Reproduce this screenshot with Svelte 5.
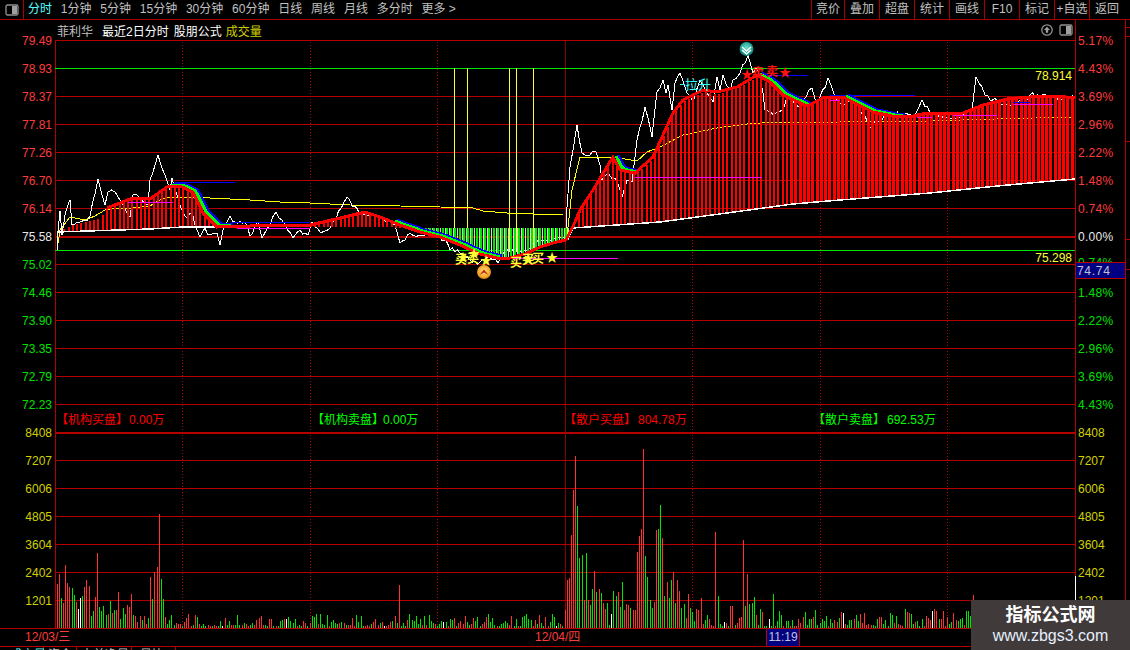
<script>
  const tabs = ['分时','1分钟','5分钟','15分钟','30分钟','60分钟','日线','周线','月线','多分时','更多 >'];
  const tools = ['竞价','叠加','超盘','统计','画线','F10','标记','+自选','返回'];

  const gridY = Array.from({length:21},(_,i)=>40+i*28);
  const dots = [182.5,310.5,437.5,692.5,820.5,947.5];
  const prices = ['79.49','78.93','78.37','77.81','77.26','76.70','76.14','75.58','75.02','74.46','73.90','73.35','72.79','72.23'];
  const pcts = ['5.17%','4.43%','3.69%','2.96%','2.22%','1.48%','0.74%','0.00%','0.74%','1.48%','2.22%','2.96%','3.69%','4.43%'];
  const vols = ['8408','7207','6006','4805','3604','2402','1201'];
  const priceCls = i => i<7 ? 'up' : i===7 ? 'flat' : 'down';

  let s = 20241;
  const rnd = () => (s = (s*16807)%2147483647)/2147483647;
  const interp = (pts,x) => {
    if (x<=pts[0][0]) return pts[0][1];
    for (let i=1;i<pts.length;i++) if (x<=pts[i][0]) {
      const [a,b]=pts[i-1],[c,d]=pts[i];
      return b+(d-b)*(x-a)/(c-a);
    }
    return pts[pts.length-1][1];
  };
  const toPts = a => a.map(p=>p.join(',')).join(' ');

  const whitePts = [[57,250],[58,232],[60,211],[62,235],[65,215],[70,200],[72,225],[80,222],[90,216],[98,179],[105,205],[108,192],[115,192],[120,200],[130,217],[133,195],[139,197],[148,205],[150,180],[158,155],[165,175],[170,190],[172,178],[180,205],[187,218],[192,212],[195,225],[200,237],[205,228],[210,235],[217,233],[220,245],[224,225],[230,216],[235,222],[245,222],[250,236],[258,222],[262,238],[276,212],[285,225],[293,238],[300,230],[308,235],[312,222],[320,232],[330,228],[347,197],[360,215],[378,215],[395,225],[400,243],[410,233],[420,235],[432,232],[445,240],[450,250],[460,253],[470,260],[480,262],[490,258],[498,263],[505,250],[515,248],[520,252],[530,248],[540,240],[550,240],[560,237],[566,235],[567,207],[570,167],[577,125],[582,153],[590,155],[596,152],[600,165],[602,180],[608,173],[615,178],[622,197],[627,180],[632,182],[637,140],[645,107],[652,137],[657,92],[663,80],[666,93],[668,85],[672,110],[675,83],[680,73],[687,93],[693,102],[700,80],[707,93],[713,102],[717,77],[720,90],[723,75],[730,90],[733,80],[740,73],[748,55],[753,73],[757,67],[763,93],[765,110],[773,115],[782,110],[787,97],[800,107],[812,88],[817,105],[828,78],[837,100],[845,105],[855,100],[860,110],[870,127],[885,115],[890,115],[905,113],[915,115],[922,100],[930,113],[940,118],[960,118],[965,112],[972,110],[976,77],[985,95],[990,100],[995,98],[1000,105],[1010,105],[1020,100],[1030,95],[1040,97],[1050,95],[1060,100],[1070,97],[1075,97]];
  const white = [];
  whitePts.forEach((p,i)=>{
    if (i>0) {
      const q = whitePts[i-1];
      const dx = p[0]-q[0];
      const n = Math.floor(dx/2.5);
      for (let k=1;k<n;k++) {
        const x = q[0]+dx*k/n;
        white.push([Math.round(x*10)/10, Math.round(q[1]+(p[1]-q[1])*k/n+(rnd()-0.5)*5)]);
      }
    }
    white.push(p);
  });

  const redPts = [[107,208],[133,198],[150,199],[167,187],[180,186],[193,192],[203,213],[217,227],[250,226],[283,225],[310,225],[340,218],[365,212],[380,217],[400,225],[420,232],[440,237],[460,245],[480,254],[497,258],[510,258],[525,254],[540,247],[553,243],[566,240],[575,222],[580,210],[593,190],[613,157],[620,170],[635,173],[653,157],[673,113],[683,100],[703,90],[717,92],[737,87],[757,75],[770,82],[783,95],[807,106],[823,98],[843,97],[873,112],[897,117],[913,116],[927,113],[963,113],[983,105],[1007,99],[1030,97],[1057,96],[1075,98]];
  const barTop = [[58,232],[70,226],[100,219],[107,209],...redPts.slice(1)];
  const basePts = [[57,232],[150,229],[183,227],[223,227],[566,228],[567,240],[573,228],[660,222],[727,213],[793,204],[840,200],[930,193],[997,186],[1075,179]];
  const avgPts = [[57,250],[60,230],[70,217],[85,220],[95,216],[105,210],[120,208],[133,208],[150,206],[160,200],[170,197],[190,197],[210,198],[230,199],[250,200],[280,202],[310,203],[350,205],[400,206],[440,207],[473,208],[483,211],[507,213],[533,214],[563,215]];
  const avg2Pts = [[567,237],[572,190],[580,157],[613,157],[637,161],[647,152],[660,147],[683,135],[703,131],[717,128],[747,124],[777,122],[840,122],[930,121],[997,119],[1075,117]];

  const segsBlue = [[168,228],[392,497],[613,636],[757,808],[843,900]].map(([a,b])=>{
    const out=[]; for(let x=a;x<=b;x+=3) out.push([x,interp(redPts,x)]); return out;
  });
  const shift = (arr,dx,dy)=>arr.map(([x,y])=>[x+dx,y+dy]);

  const hLines = [
    [175,235,182,'blue'],[128,173,202,'mag'],[232,310,222,'blue'],[237,310,228,'mag'],
    [505,618,258,'mag'],[635,762,177,'mag'],[760,808,75,'blue'],[830,915,95,'blue'],
    [830,840,100,'mag'],[917,932,117,'mag'],[933,953,112,'blue'],[953,997,115,'mag'],
    [1013,1053,104,'mag'],[1013,1030,102,'blue']
  ];
  const yellowV = [[454,228],[467,228],[509,252],[516,252],[533,252]];

  const bars = [];
  for (let x=60; x<1075; x+=4.25) {
    const b = interp(basePts,x), t = interp(barTop,x);
    if (x>=566 || t<b-0.5) {
      bars.push({x:Math.round(x), y1:b, y2:t+(x>640&&x<770?2:0), w: x>=790?3:2, c:'#ff0000'});
    } else if (x>400 && x<566 && t>b) {
      bars.push({x:Math.round(x), y1:b, y2:t, w:2, c:'#00e600'});
      bars.push({x:Math.round(x+2), y1:b, y2:t, w:1, c: x>478&&x<530 ? '#d8d8d8' : '#a8f0a8'});
    }
  }

  const peaks = {57:[584,'R'],59:[574,'R'],61:[598,'G'],64:[603,'R'],66:[565,'R'],68:[583,'R'],70:[587,'R'],72:[588,'G'],74:[595,'G'],76:[602,'R'],78:[609,'W'],81:[598,'W'],83:[596,'G'],85:[587,'R'],87:[580,'R'],89:[586,'R'],91:[616,'G'],93:[611,'G'],95:[597,'R'],98:[553,'R'],100:[607,'G'],102:[611,'G'],104:[606,'G'],106:[615,'G'],108:[614,'R'],110:[601,'G'],112:[613,'R'],115:[610,'G'],117:[610,'R'],119:[592,'R'],121:[619,'G'],123:[608,'G'],125:[614,'G'],127:[605,'R'],129:[607,'R'],132:[594,'R'],134:[615,'G'],136:[616,'R'],138:[622,'R'],140:[616,'R'],142:[620,'G'],144:[616,'R'],147:[624,'R'],149:[618,'G'],151:[577,'R'],153:[599,'G'],155:[572,'R'],157:[567,'R'],159:[514,'R'],161:[579,'G'],163:[599,'G'],400:[585,'R'],
    566:[610,'R'],567:[580,'R'],569:[578,'R'],571:[535,'R'],574:[490,'R'],576:[456,'R'],578:[506,'G'],580:[558,'G'],582:[555,'G'],584:[600,'R'],586:[553,'G'],588:[600,'R'],591:[605,'G'],593:[589,'G'],595:[571,'R'],597:[592,'G'],599:[589,'R'],601:[593,'G'],603:[603,'R'],605:[609,'R'],608:[603,'G'],612:[614,'W'],614:[591,'G'],616:[596,'G'],618:[592,'R'],620:[607,'G'],622:[582,'G'],625:[610,'R'],627:[604,'R'],629:[605,'R'],631:[608,'G'],633:[610,'R'],635:[610,'R'],637:[552,'R'],639:[536,'R'],642:[529,'R'],644:[449,'R'],646:[556,'G'],648:[577,'G'],650:[600,'G'],652:[608,'G'],654:[602,'R'],656:[530,'R'],659:[529,'G'],661:[505,'G'],663:[538,'R'],665:[596,'G'],667:[582,'R'],669:[598,'G'],671:[580,'G'],673:[572,'R'],676:[603,'G'],678:[580,'R'],680:[591,'R'],682:[608,'G'],684:[604,'G'],686:[618,'R'],688:[594,'R'],690:[608,'G'],692:[612,'G'],696:[609,'R'],698:[610,'R'],700:[598,'R'],716:[532,'R'],718:[596,'G'],744:[540,'R'],748:[574,'R'],750:[604,'G'],753:[603,'G'],755:[597,'G'],773:[594,'G'],
    974:[595,'R']};
  const peakByIdx = {};
  for (const k of Object.keys(peaks)) peakByIdx[Math.round((k-55)/2.125)] = peaks[k];
  const colors = {R:'#ff3232',G:'#00e600',W:'#ffffff'};
  const volBars = [];
  for (let i=1;i<480;i++) {
    const x = Math.floor(55+i*2.125)+0.5;
    const p = peakByIdx[i];
    let top, c;
    if (p) { top=p[0]; c=p[1]; }
    else {
      const r=rnd();
      const maxH = x<570 ? 12 : x<770 ? 26 : 17;
      top = 628-Math.round(2+r*r*maxH);
      const q=rnd();
      c = q<0.48?'R':q<0.97?'G':'W';
    }
    volBars.push({x,top,c:colors[c]});
  }
  const ticks = [27,36,141,239,269];
  const footTabs = [43,76,131,175];
</script>

<div class="page">
  <header class="toolbar">
    <div class="layout-btn">
      <svg width="14" height="12" viewBox="0 0 14 12"><rect x="1" y="1" width="12" height="10" rx="1.5" class="ico-ring"/><rect x="7" y="2" width="5" height="8" class="ico-fill"/></svg>
    </div>
    <nav class="tabs">
      {#each tabs as t, i}<span class="tab" class:active={i===0}>{t}</span>{/each}
    </nav>
    <div class="tools">
      {#each tools as t}<span class="tool">{t}</span>{/each}
    </div>
  </header>

  <section class="title">
    <span class="name">菲利华</span>
    <span class="w range">最近2日分时</span>
    <span class="w formula">股朋公式</span>
    <span class="y">成交量</span>
    <span class="title-icons">
      <svg width="14" height="12" viewBox="0 0 14 12"><circle cx="7" cy="6" r="5.2" class="ico-ring"/><path d="M7 2.800 10 6H8.200v2.800H5.800V6H4z" class="ico-arrow"/></svg>
      <svg width="14" height="12" viewBox="0 0 14 12"><rect x="1" y="1" width="12" height="10" rx="1.500" class="ico-ring"/><rect x="7" y="2" width="5" height="8" class="ico-fill"/></svg>
    </span>
  </section>

  <svg class="chart" width="1130" height="630" viewBox="0 20 1130 630">
    <defs>
      <radialGradient id="orange" cx="50%" cy="45%" r="60%"><stop offset="0" stop-color="#ffe08a"/><stop offset="0.7" stop-color="#f5a623"/><stop offset="1" stop-color="#c06a10"/></radialGradient>
      <radialGradient id="teal" cx="50%" cy="40%" r="60%"><stop offset="0" stop-color="#6fe0c8"/><stop offset="0.7" stop-color="#1f9f95"/><stop offset="1" stop-color="#0f6d6a"/></radialGradient>
    </defs>

    <g class="crisp">
      {#each gridY as y}
        <line x1="55" x2="1075" y1={y+0.5} y2={y+0.5} class="grid" class:thick={y===236||y===432}/>
      {/each}
      {#each dots as x}
        <line x1={x} x2={x} y1="42" y2="628" class="dot"/>
      {/each}
      <line x1="565.5" x2="565.5" y1="40" y2="628" class="divider"/>
      <line x1="55.5" x2="55.5" y1="40" y2="628" class="grid"/>
      <line x1="1075.5" x2="1075.5" y1="20" y2="650" class="grid"/>
      <line x1="1125.5" x2="1125.5" y1="20" y2="650" class="grid"/>
      {#each ticks as y}<line x1="1126" x2="1130" y1={y+0.5} y2={y+0.5} class="grid"/>{/each}
      <line x1="0" x2="1075" y1="628.5" y2="628.5" class="grid"/>
      <line x1="0" x2="1075" y1="646.5" y2="646.5" class="grid"/>

      <line x1="55" x2="1075" y1="68.5" y2="68.5" class="lim"/>
      <line x1="55" x2="1075" y1="250.5" y2="250.5" class="lim"/>

      {#each yellowV as [x,y]}
        <line x1={x+0.5} x2={x+0.5} y1="68" y2={y} class="yv"/>
      {/each}

      <polyline points={toPts(avgPts)} class="avg"/>
      <polyline points={toPts(avg2Pts)} class="avg"/>
      <polyline points={toPts(white)} class="price"/>

      {#each bars as b}
        <line x1={b.x} x2={b.x} y1={b.y1} y2={b.y2} stroke={b.c} stroke-width={b.w}/>
      {/each}

      <polyline points={toPts(basePts.slice(0,4))} class="base"/>
      <polyline points={toPts(basePts.slice(5))} class="base"/>

      {#each hLines as [a,b,y,k]}
        <line x1={a} x2={b} y1={y+0.5} y2={y+0.5} class={k}/>
      {/each}

      {#each segsBlue as seg}
        <polyline points={toPts(shift(seg,5,-2))} class="band blue-b"/>
        <polyline points={toPts(shift(seg,3,-1))} class="band green-b"/>
      {/each}
      <polyline points={toPts(redPts)} class="ma"/>

      {#each volBars as v}
        <line x1={v.x} x2={v.x} y1={v.top} y2="628" stroke={v.c}/>
      {/each}
      <line x1="1075.5" x2="1075.5" y1="576" y2="600" class="wtick"/>
    </g>

    <text x="457" y="262" class="sig buy">★</text>
    <text x="455" y="264" class="sig buy">买</text>
    <text x="468" y="258" class="sig buy">★</text>
    <text x="467" y="263" class="sig buy">买</text>
    <text x="480" y="265" class="sig buy">★</text>
    <text x="510" y="267" class="sig buy">买</text>
    <text x="522" y="263" class="sig buy">★</text>
    <text x="522" y="264" class="sig buy">买</text>
    <text x="532" y="263" class="sig buy">买</text>
    <text x="546" y="262" class="sig buy">★</text>

    <text x="741" y="79" class="sig sell">★</text>
    <text x="752" y="77" class="sig sell">卖</text>
    <text x="766" y="76" class="sig sell">卖</text>
    <text x="779" y="77" class="sig sell">★</text>

    <line x1="680" x2="685" y1="84.5" y2="84.5" class="cy crisp"/>
    <text x="685" y="89" class="lift">拉升</text>

    <circle cx="484" cy="272" r="7" fill="url(#orange)"/>
    <path d="M479.500 275 484 269.500 488.500 275 484 272.500z" class="ico-up"/>
    <circle cx="746.500" cy="49" r="7" fill="url(#teal)"/>
    <path d="M742 47 746.500 51 751 47M742 50 746.500 54 751 50" class="ico-down"/>

    {#each prices as p,i}
      <text x="52" y={45+i*28} class="ax end {priceCls(i)}">{p}</text>
      {#if i!==8}<text x="1078" y={45+i*28} class="ax pct {priceCls(i)}">{pcts[i]}</text>{/if}
    {/each}
    <text x="1078" y="267" class="ax pct down">0.74%</text>
    {#each vols as v,i}
      <text x="52" y={437+i*28} class="ax end vol">{v}</text>
      <text x="1078" y={437+i*28} class="ax vol">{v}</text>
    {/each}
    <text x="1072" y="80" class="ax end lim-t">78.914</text>
    <text x="1072" y="262" class="ax end lim-t">75.298</text>

    <rect x="1075.500" y="262.500" width="50" height="16" class="now-box crisp"/>
    <text x="1077" y="275" class="ax now">74.74</text>

    <text x="56" y="424" class="cap r">【机构买盘】</text><text x="129" y="424" class="cap r">0.00万</text>
    <text x="312" y="424" class="cap g">【机构卖盘】</text><text x="383" y="424" class="cap g">0.00万</text>
    <text x="564" y="424" class="cap r">【散户买盘】</text><text x="638" y="424" class="cap r">804.78万</text>
    <text x="813" y="424" class="cap g">【散户卖盘】</text><text x="887" y="424" class="cap g">692.53万</text>

    <text x="25" y="641" class="date">12/03/三</text>
    <text x="535" y="641" class="date">12/04/四</text>
    <rect x="766.500" y="628.500" width="33" height="18" class="time-box crisp"/>
    <text x="783" y="641" class="time">11:19</text>

    {#each footTabs as x}<line x1={x+0.5} x2={x+0.5} y1="647" y2="650" class="grid crisp"/>{/each}
    <text x="10" y="659" class="foot active-f">成交量</text>
    <text x="48" y="659" class="foot">资金</text>
    <text x="81" y="659" class="foot">大单净量</text>
    <text x="140" y="659" class="foot">量比</text>
  </svg>

  <aside class="mark">
    <div class="mark-cn">指标公式网</div>
    <div class="mark-url">www.zbgs3.com</div>
  </aside>
</div>

<style>
  :global(body){margin:0;background:#000;}
  .page{position:relative;width:1130px;height:650px;background:#000;overflow:hidden;font-family:"Liberation Sans","Noto Sans CJK SC",sans-serif;font-size:12px;color:#c0c0c0;}
  .toolbar{display:flex;height:19px;border-bottom:1px solid #a80000;}
  .layout-btn{width:23px;border-right:1px solid #a80000;display:flex;align-items:center;justify-content:center;}
  .tabs{display:flex;align-items:center;gap:8.8px;padding-left:4px;line-height:19px;}
  .tab.active{color:#55ffff;}
  .tools{margin-left:auto;display:flex;padding-right:6px;}
  .tool{width:35px;box-sizing:border-box;border-left:1px solid #a80000;text-align:center;line-height:19px;}
  .tool:first-child{width:33px;}
  .title{position:relative;z-index:1;display:flex;align-items:center;width:1075px;height:20px;margin-bottom:-20px;padding-left:57px;box-sizing:border-box;}
  .name{margin-right:9px;}
  .w{color:#fff;}
  .range{margin-right:5px;}
  .formula{margin-right:4px;}
  .y{color:#d0d000;}
  .title-icons{margin-left:auto;display:flex;gap:5px;padding-right:2px;}
  .ico-ring{fill:#000;stroke:#909090;stroke-width:1.3;}
  .ico-fill{fill:#a0a0a0;}
  .ico-arrow{fill:#a0a0a0;}
  .chart{display:block;}
  .crisp{shape-rendering:crispEdges;}
  .grid{stroke:#b40000;stroke-width:1;}
  .grid.thick{stroke-width:2;}
  .dot{stroke:#b40000;stroke-dasharray:1 2;}
  .divider{stroke:#8c0000;}
  .lim{stroke:#00e600;}
  .yv{stroke:#ffff33;}
  .base{fill:none;stroke:#fff;stroke-width:1.5;}
  .avg{fill:none;stroke:#ffff00;stroke-width:1;}
  .price{fill:none;stroke:#fff;stroke-width:1;}
  .band{fill:none;stroke-width:3;}
  .blue-b{stroke:#0000ff;}
  .green-b{stroke:#00ff00;}
  .ma{fill:none;stroke:#ff0000;stroke-width:3;}
  .blue{stroke:#0000ff;}
  .mag{stroke:#ff00ff;}
  .wtick{stroke:#fff;}
  .cy{stroke:#33ffff;}
  .sig{font-size:12px;font-weight:700;}
  .buy{fill:#ffff33;}
  .sell{fill:#ff1010;}
  .lift{fill:#33ffff;font-size:13px;}
  .ico-up{fill:#b82a10;}
  .ico-down{fill:none;stroke:#fff;stroke-width:1.4;}
  .ax{font-size:12px;}
  .end{text-anchor:end;}
  .pct{letter-spacing:.3px;}
  .up{fill:#ff3c3c;}
  .flat{fill:#e8e8e8;}
  .down{fill:#00e000;}
  .vol{fill:#d0d000;}
  .lim-t{fill:#ffff33;}
  .now-box{fill:#000080;stroke:#b40000;}
  .now{fill:#c0c0d8;letter-spacing:.7px;}
  .cap{font-size:12px;}
  .r{fill:#ff0000;}
  .g{fill:#00ff00;}
  .date{fill:#ff3c3c;font-size:12px;}
  .time-box{fill:#000080;stroke:#b40000;}
  .time{fill:#c0c0d8;font-size:12px;text-anchor:middle;}
  .foot{fill:#c0c0c0;font-size:12px;}
  .active-f{fill:#55ffff;}
  .mark{position:absolute;left:971px;top:600px;width:159px;height:50px;background:#403a3a;text-align:center;color:#fff;}
  .mark-cn{font-size:18px;font-weight:700;line-height:20px;margin-top:5px;}
  .mark-url{font-size:16px;line-height:18px;margin-top:2px;color:#e6f0ff;}
</style>
